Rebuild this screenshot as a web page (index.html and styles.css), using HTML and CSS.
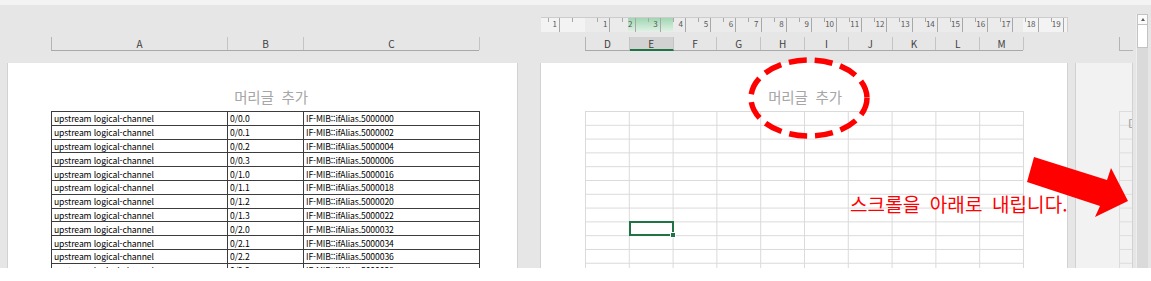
FILE: index.html
```html
<!DOCTYPE html>
<html lang="ko">

<head>
    <meta charset="UTF-8">
    <meta name="viewport" content="width=device-width, initial-scale=1.0">
    <title>페이지 레이아웃</title>
    <link rel="stylesheet" href="styles.css">
</head>

<body>
    <div class="app">
        <div class="topbar"></div>
        <div class="main">
            <div class="sheets">
                <!-- page 1 -->
                <section class="pane pane-left">
                    <div class="heads">
                        <div class="colhead colhead-left">
                            <span class="ch ch-wide">A</span><span class="ch ch-narrow">B</span><span class="ch ch-wide">C</span>
                        </div>
                    </div>
                    <div class="page">
                        <div class="pagehead pagehead-left">머리글 추가</div>
                        <table class="data">
                            <colgroup>
                                <col class="c-wide">
                                <col class="c-narrow">
                                <col class="c-wide">
                            </colgroup>
                            <tr><td>upstream logical-channel</td><td>0/0.0</td><td>IF-MIB::ifAlias.5000000</td></tr>
                            <tr><td>upstream logical-channel</td><td>0/0.1</td><td>IF-MIB::ifAlias.5000002</td></tr>
                            <tr><td>upstream logical-channel</td><td>0/0.2</td><td>IF-MIB::ifAlias.5000004</td></tr>
                            <tr><td>upstream logical-channel</td><td>0/0.3</td><td>IF-MIB::ifAlias.5000006</td></tr>
                            <tr><td>upstream logical-channel</td><td>0/1.0</td><td>IF-MIB::ifAlias.5000016</td></tr>
                            <tr><td>upstream logical-channel</td><td>0/1.1</td><td>IF-MIB::ifAlias.5000018</td></tr>
                            <tr><td>upstream logical-channel</td><td>0/1.2</td><td>IF-MIB::ifAlias.5000020</td></tr>
                            <tr><td>upstream logical-channel</td><td>0/1.3</td><td>IF-MIB::ifAlias.5000022</td></tr>
                            <tr><td>upstream logical-channel</td><td>0/2.0</td><td>IF-MIB::ifAlias.5000032</td></tr>
                            <tr><td>upstream logical-channel</td><td>0/2.1</td><td>IF-MIB::ifAlias.5000034</td></tr>
                            <tr><td>upstream logical-channel</td><td>0/2.2</td><td>IF-MIB::ifAlias.5000036</td></tr>
                            <tr><td>upstream logical-channel</td><td>0/2.3</td><td>IF-MIB::ifAlias.5000038</td></tr>
                        </table>
                    </div>
                </section>

                <!-- page 2 (active) -->
                <section class="pane pane-mid">
                    <div class="heads">
                        <div class="ruler">
                            <span class="cm cm-first">1</span><span class="cm cm-blank"></span><span class="cm">1</span><span class="cm">2</span><span class="cm">3</span><span class="cm">4</span><span class="cm">5</span><span class="cm">6</span><span class="cm">7</span><span class="cm">8</span><span class="cm">9</span><span class="cm">10</span><span class="cm">11</span><span class="cm">12</span><span class="cm">13</span><span class="cm">14</span><span class="cm">15</span><span class="cm">16</span><span class="cm">17</span><span class="cm">18</span><span class="cm">19</span>
                        </div>
                        <div class="colhead colhead-mid">
                            <span class="ch">D</span><span class="ch active">E</span><span class="ch">F</span><span class="ch">G</span><span class="ch">H</span><span class="ch">I</span><span class="ch">J</span><span class="ch">K</span><span class="ch">L</span><span class="ch">M</span>
                        </div>
                    </div>
                    <div class="page">
                        <div class="pagehead pagehead-mid">머리글 추가</div>
                        <div class="cells">
                            <div class="sel"></div>
                        </div>
                    </div>
                </section>

                <!-- page 3 (peek) -->
                <section class="pane pane-side">
                    <div class="heads">
                        <div class="colhead colhead-side"><span class="ch ch-stub"></span></div>
                    </div>
                    <div class="page page-next">
                        <div class="cells-next"><span class="peek">머리글</span></div>
                    </div>
                </section>
            </div>

            <div class="vscroll">
                <div class="vbtn"></div>
                <div class="vthumb"></div>
            </div>
        </div>
    </div>

    <svg class="marks" width="1151" height="281" viewBox="0 0 1151 281">
        <ellipse cx="809" cy="98" rx="58" ry="38" fill="none" stroke="#ff0000" stroke-width="5.5"
            stroke-dasharray="18 8" />
        <polygon points="1034,157 1107,180 1111,168 1128,201 1095,217 1100,206 1027,182" fill="#ff0000" />
    </svg>
    <div class="note">스크롤을 아래로 내립니다.</div>
</body>

</html>
```

FILE: styles.css
```css
body {
    margin: 0;
    width: 1151px;
    height: 281px;
    overflow: hidden;
    background: #ffffff;
    font-family: 'Noto Sans CJK KR', 'Noto Sans', sans-serif;
    position: relative;
}

.app {
    height: 268px;
    background: #e6e6e6;
    display: flex;
    flex-direction: column;
}

.topbar {
    height: 5px;
    background: #f3f3f3;
}

.main {
    flex: 1;
    display: flex;
    min-height: 0;
}

.sheets {
    display: flex;
    padding-left: 7px;
    width: 1133px;
    box-sizing: border-box;
}

.pane {
    display: flex;
    flex-direction: column;
}

.pane-left {
    width: 511px;
}

.pane-mid {
    width: 528px;
    margin-left: 22px;
}

.pane-side {
    width: 58px;
    margin-left: 7px;
}

/* column letters + ruler */
.heads {
    height: 58px;
    display: flex;
    flex-direction: column;
    justify-content: flex-end;
    padding-bottom: 12px;
    box-sizing: border-box;
}

.colhead {
    display: flex;
    height: 14px;
    box-sizing: border-box;
    border-bottom: 1px solid #a9a9a9;
    font-size: 10px;
    line-height: 13px;
    color: #404040;
}

.colhead-left {
    margin-left: 44px;
    width: 428px;
    border-left: 1px solid #b4b4b4;
}

.colhead-mid {
    margin-left: 45px;
    width: 438px;
    border-left: 1px solid #b4b4b4;
}

.colhead-side {
    margin-left: 44px;
    border-left: 1px solid #b4b4b4;
    border-bottom-color: #b4b4b4;
}

.ch {
    flex: 0 0 43.8px;
    box-sizing: border-box;
    border-right: 1px solid #c4c4c4;
    text-align: center;
}

.ch-wide {
    flex-basis: 176px;
}

.ch-narrow {
    flex-basis: 76px;
}

.ch-stub {
    border: none;
}

.ch.active {
    background: #d2d2d2;
    border-bottom: 2px solid #217346;
    margin-bottom: -1px;
}

.ruler {
    display: flex;
    height: 15px;
    margin-left: 1px;
    margin-bottom: 5px;
    box-sizing: border-box;
    border-top: 1px solid #cccccc;
    border-right: 1px solid #d0d0d0;
    overflow: hidden;
    background:
        linear-gradient(#9fd7b1, #e4f1e8) 87px 0 / 45px 100% no-repeat,
        linear-gradient(90deg, #f3f3f3 0 44px, #ebebeb 44px 482px, #f3f3f3 482px);
    font-size: 8px;
    line-height: 12px;
    color: #555555;
}

.cm {
    flex: 0 0 25.2px;
    box-sizing: border-box;
    position: relative;
    text-align: right;
    padding-right: 2px;
    border-right: 1px solid #a8a8a8;
}

.cm::before {
    content: "";
    position: absolute;
    left: 12px;
    top: 0;
    width: 1px;
    height: 4px;
    background: #a8a8a8;
}

.cm-first {
    flex-basis: 19px;
}

.cm-first::before {
    left: 7px;
}

.cm-blank {
    border-right: none;
}

/* pages */
.page {
    flex: 1;
    min-height: 0;
    overflow: hidden;
    background: #ffffff;
    border-left: 1px solid #d2d2d2;
    border-right: 1px solid #d2d2d2;
}

.page-next {
    background: #f2f2f2;
}

.pagehead {
    height: 48px;
    box-sizing: border-box;
    padding-top: 26px;
    width: 440px;
    text-align: center;
    font-size: 14.5px;
    line-height: 16px;
    letter-spacing: -0.2px;
    word-spacing: 4px;
    color: #a6a6a6;
}

.pagehead-left {
    margin-left: 43px;
}

.pagehead-mid {
    margin-left: 44px;
}

.data {
    margin-left: 43px;
    width: 428px;
    border-collapse: collapse;
    table-layout: fixed;
    font-size: 8.6px;
    letter-spacing: -0.1px;
    color: #000000;
}

.c-wide {
    width: 176px;
}

.c-narrow {
    width: 76px;
}

.data td {
    height: 12.8px;
    padding: 0 0 0 2px;
    line-height: 12px;
    border: 1px solid #3c3c3c;
    white-space: nowrap;
    overflow: hidden;
}

.cells {
    margin-left: 44px;
    width: 439px;
    height: 166px;
    box-sizing: border-box;
    border-right: 1px solid #dadada;
    display: grid;
    grid-template-columns: repeat(10, 43.8px);
    grid-template-rows: repeat(12, 13.8px);
    background:
        linear-gradient(90deg, #dadada 1px, transparent 1px) 0 0 / 43.8px 100%,
        linear-gradient(#dadada 1px, transparent 1px) 0 0 / 100% 13.8px;
}

.sel {
    grid-column: 2;
    grid-row: 9;
    border: 2px solid #217346;
    margin: 0 -1px -1px 0;
    position: relative;
}

.sel::after {
    content: "";
    position: absolute;
    right: -4px;
    bottom: -4px;
    width: 4px;
    height: 4px;
    background: #217346;
    border: 1px solid #ffffff;
}

.cells-next {
    margin: 48px 0 0 43px;
    height: 160px;
    border-left: 1px solid #dcdcdc;
    background: linear-gradient(#dcdcdc 1px, transparent 1px) 0 0 / 100% 13.8px;
}

.peek {
    display: block;
    padding: 6px 0 0 8px;
    font-size: 13px;
    line-height: 14px;
    color: #a0a0a0;
    white-space: nowrap;
}

/* vertical scrollbar */
.vscroll {
    width: 12px;
    margin: 9px 3px 0 3px;
    background: #dadada;
    box-sizing: border-box;
    border-left: 1px solid #eeeeee;
}

.vbtn {
    height: 11px;
    box-sizing: border-box;
    background: #fbfbfb;
    border: 1px solid #c3c3c3;
    position: relative;
}

.vbtn::after {
    content: "";
    position: absolute;
    left: 3px;
    top: 3px;
    border-left: 2.5px solid transparent;
    border-right: 2.5px solid transparent;
    border-bottom: 3px solid #5f5f5f;
}

.vthumb {
    height: 23px;
    box-sizing: border-box;
    background: #ffffff;
    border: 1px solid #c3c3c3;
    border-top: none;
}

/* annotations drawn over the screenshot */
.marks {
    position: absolute;
    left: 0;
    top: 0;
    pointer-events: none;
}

.note {
    position: absolute;
    left: 850px;
    top: 191px;
    font-size: 19px;
    line-height: 26px;
    letter-spacing: 0.1px;
    word-spacing: 4px;
    color: #ff0000;
    white-space: nowrap;
}
```
